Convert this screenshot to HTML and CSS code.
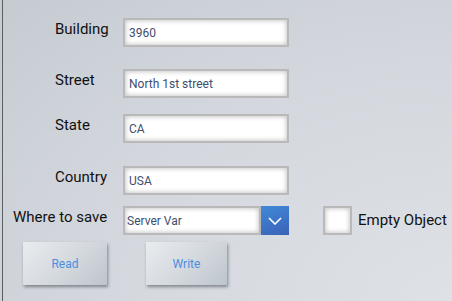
FILE: index.html
```html
<!DOCTYPE html>
<html>
<head>
<meta charset="utf-8">
<link rel="stylesheet" href="styles.css">
</head>
<body>
<div class="frame">
  <div class="row r1">
    <div class="label">Building</div>
    <div class="field">3960</div>
  </div>
  <div class="row r2">
    <div class="label">Street</div>
    <div class="field">North 1st street</div>
  </div>
  <div class="row r3">
    <div class="label">State</div>
    <div class="field">CA</div>
  </div>
  <div class="row r4">
    <div class="label">Country</div>
    <div class="field">USA</div>
  </div>
  <div class="row r5">
    <div class="label wide">Where to save</div>
    <div class="select">
      <div class="select-value">Server Var</div>
      <div class="select-btn">
        <svg width="14" height="8" viewBox="0 0 14 8"><path d="M1 1 L7 7 L13 1" fill="none" stroke="#fff" stroke-width="1.6"/></svg>
      </div>
    </div>
    <div class="check"></div>
    <div class="check-label">Empty Object</div>
  </div>
  <div class="buttons">
    <div class="btn read">Read</div>
    <div class="btn write">Write</div>
  </div>
</div>
</body>
</html>
```
FILE: styles.css
```css
html, body {
  margin: 0;
  padding: 0;
  width: 452px;
  height: 301px;
  overflow: hidden;
}
body {
  background: radial-gradient(ellipse at 100% 100%, #dee2e7 0%, #d4d8de 55%, #c6cbd2 100%);
  font-family: Roboto, "Liberation Sans", sans-serif;
}
.frame {
  margin-left: 2px;
  border-left: 1px solid #5b5f64;
  height: 301px;
  box-sizing: border-box;
  padding-top: 18px;
}
.row {
  display: flex;
  align-items: center;
  height: 29px;
}
.r2 { margin-top: 22px; }
.r3 { margin-top: 16px; }
.r4 { margin-top: 23px; }
.r5 { margin-top: 11px; }
.label {
  width: 68px;
  padding-left: 52px;
  padding-bottom: 7px;
  font-size: 15px;
  color: #111;
}
.label.wide {
  width: 110px;
  padding-left: 10px;
}
.field, .select-value {
  width: 166px;
  height: 29px;
  box-sizing: border-box;
  border: 2px solid #b9b9b9;
  background: #fff;
  box-shadow: inset 0 0 4px 1px #c9c9c9;
  font-size: 12px;
  color: #3d4e6e;
  padding-left: 4px;
  display: flex;
  align-items: center;
}
.select {
  display: flex;
  width: 166px;
  height: 29px;
}
.select-value {
  width: 138px;
  padding-left: 2px;
}
.select-btn {
  width: 28px;
  height: 29px;
  background: linear-gradient(160deg, #4189d8, #3a62b6);
  display: flex;
  align-items: center;
  justify-content: center;
}
.check {
  margin-left: 34px;
  width: 29px;
  height: 29px;
  box-sizing: border-box;
  border: 2px solid #b9b9b9;
  background: #fff;
  box-shadow: inset 0 0 4px 1px #c9c9c9;
}
.check-label {
  margin-left: 6px;
  padding-bottom: 2px;
  font-size: 15px;
  color: #111;
}
.buttons {
  display: flex;
  margin-top: 7px;
  padding-left: 20px;
  gap: 39px;
}
.btn {
  height: 43px;
  display: flex;
  align-items: center;
  justify-content: center;
  font-size: 12px;
  color: #4a8ee0;
  background: linear-gradient(135deg, #e9ecef 0%, #d3d8dd 55%, #bdc5cd 100%);
  box-shadow: 1px 2px 3px rgba(60, 65, 75, 0.55);
}
.read { width: 84px; }
.write { width: 81px; }
```
